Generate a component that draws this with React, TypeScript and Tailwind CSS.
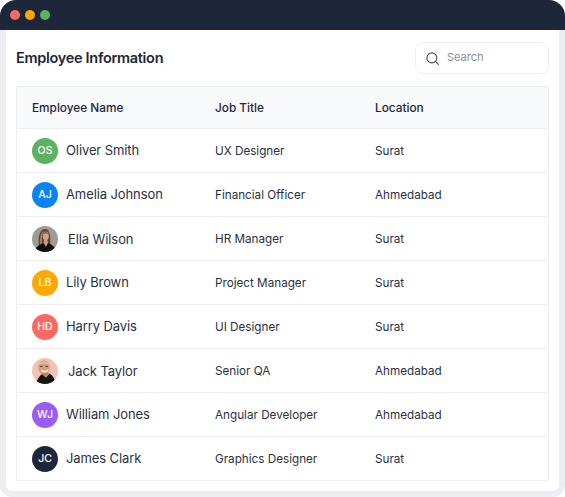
const employees = [
  { name: 'Oliver Smith', title: 'UX Designer', location: 'Surat', initials: 'OS', color: 'bg-[#5cb25f]' },
  { name: 'Amelia Johnson', title: 'Financial Officer', location: 'Ahmedabad', initials: 'AJ', color: 'bg-[#0a84f5]' },
  { name: 'Ella Wilson', title: 'HR Manager', location: 'Surat', photo: 'ella' },
  { name: 'Lily Brown', title: 'Project Manager', location: 'Surat', initials: 'LB', color: 'bg-[#ffa800]' },
  { name: 'Harry Davis', title: 'UI Designer', location: 'Surat', initials: 'HD', color: 'bg-[#fb6a62]' },
  { name: 'Jack Taylor', title: 'Senior QA', location: 'Ahmedabad', photo: 'jack' },
  { name: 'William Jones', title: 'Angular Developer', location: 'Ahmedabad', initials: 'WJ', color: 'bg-[#9b5cf6]' },
  { name: 'James Clark', title: 'Graphics Designer', location: 'Surat', initials: 'JC', color: 'bg-[#1e2639]' },
]

function EllaPhoto() {
  return (
    <svg viewBox="0 0 26 26" className="w-[26px] h-[26px] rounded-full">
      <rect width="26" height="26" fill="#9d9c97" />
      <path d="M7 21C5.500 12 7.500 3 13 3C18 3 19 11 18 18Z" fill="#5e4231" />
      <path d="M8 20C7.500 13 8.500 6 11.500 4.500C9.500 9 10 15 10.500 20Z" fill="#a47e5e" />
      <ellipse cx="13.800" cy="10" rx="3" ry="4.400" fill="#d2a288" />
      <path d="M10.800 8.500C11.500 5.500 15.500 5 16.800 8.500C15 7 12.500 7 10.800 8.500Z" fill="#7c5a40" />
      <path d="M1 26C3.500 21 8 18.500 11.500 17L14 20.500L16 17C20 18.500 23 21 25 26Z" fill="#101012" />
      <path d="M12.300 13.500H15.300L16 17L14 20.500L11.500 17Z" fill="#c9987e" />
    </svg>
  )
}

function JackPhoto() {
  return (
    <svg viewBox="0 0 26 26" className="w-[26px] h-[26px] rounded-full">
      <rect width="26" height="26" fill="#efc4b2" />
      <ellipse cx="12" cy="9.500" rx="5.800" ry="7" fill="#d59c80" />
      <path d="M6.500 7.500C7 3 16.500 2 18 7.500C15 4.800 10 4.800 6.500 7.500Z" fill="#e2bda8" />
      <path d="M8 8.500H10.500M13.500 8.500H16" stroke="#4a2e22" strokeWidth="0.900" />
      <path d="M8.500 11.500C11 13 14 13 16.500 11.500C16 15.500 9.500 15.500 8.500 11.500Z" fill="#f7f1ec" />
      <path d="M4 26C5 21 8 17.500 10 16L14 19.500L17.500 15.500C21 17.500 23 21 24 26Z" fill="#171414" />
      <path d="M10 15H16.500L17.500 15.500L14 19.500L10 16Z" fill="#bd8468" />
    </svg>
  )
}

export default function App() {
  return (
    <div className="w-[565px] h-[497px] bg-white font-['Inter',sans-serif]">
      <div className="h-[497px] bg-[#eceef2] rounded-b-[12px] rounded-t-[16px] overflow-hidden flex flex-col">
        <div className="h-[30px] bg-[#1e2639] flex items-center gap-[5px] pl-[10px] shrink-0">
          <span className="w-[10px] h-[10px] rounded-full bg-[#fb6a62]" />
          <span className="w-[10px] h-[10px] rounded-full bg-[#ffa800]" />
          <span className="w-[10px] h-[10px] rounded-full bg-[#5cb25f]" />
        </div>
        <div className="mx-[6px] mb-[6px] flex-1 bg-white rounded-b-[6px] px-[10px] pt-[12px]">
          <div className="flex items-center justify-between h-[32px]">
            <h1 className="text-[14.500px] font-semibold text-[#1e2639] tracking-[-0.3px]">Employee Information</h1>
            <div className="w-[134px] h-[32px] border border-[#eceef2] rounded-[8px] flex items-center pl-[9px] gap-[7px]">
              <svg viewBox="0 0 24 24" className="w-[15px] h-[15px]" fill="none" stroke="#4b5160" strokeWidth="1.800" strokeLinecap="round">
                <circle cx="11" cy="11" r="8" />
                <path d="M17 17L21.500 21.500" />
              </svg>
              <span className="text-[11px] text-[#8b8f9a] pb-[1px]">Search</span>
            </div>
          </div>
          <div className="mt-[12px] border border-[#eceef2] h-[395px] text-[#1e2639]">
            <div className="h-[42px] pt-[2px] bg-[#f8f9fb] border-b border-[#eceef2] grid grid-cols-[183px_160px_1fr] items-center pl-[15px] text-[11.800px] font-medium">
              <span>Employee Name</span>
              <span>Job Title</span>
              <span>Location</span>
            </div>
            {employees.map((e, i) => (
              <div
                key={e.name}
                className={`h-[44px] grid grid-cols-[183px_160px_1fr] items-center pl-[15px] text-[11.700px] text-[#2b3142] ${i < employees.length - 1 ? 'border-b border-[#eceef2]' : ''}`}
              >
                <div className="flex items-center">
                  {e.photo === 'ella' && <EllaPhoto />}
                  {e.photo === 'jack' && <JackPhoto />}
                  {e.initials && (
                    <span className={`w-[26px] h-[26px] rounded-full flex items-center justify-center text-white text-[10.500px] font-medium ${e.color}`}>
                      {e.initials}
                    </span>
                  )}
                  <span className={`text-[13px] tracking-[-0.1px] ${e.photo ? 'ml-[10px] pt-[2px]' : 'ml-[8px]'}`}>{e.name}</span>
                </div>
                <span className="pt-[2px]">{e.title}</span>
                <span className="pt-[2px]">{e.location}</span>
              </div>
            ))}
          </div>
        </div>
      </div>
    </div>
  )
}
